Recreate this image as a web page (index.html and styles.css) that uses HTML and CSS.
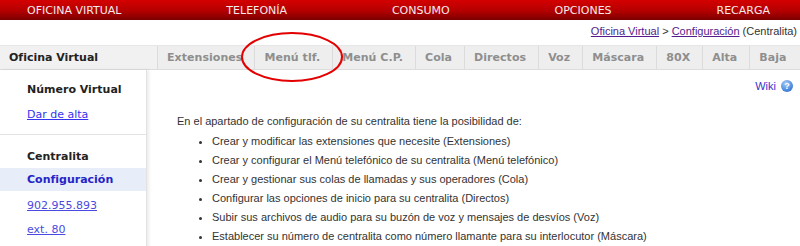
FILE: index.html
```
<!DOCTYPE html>
<html lang="es">
<head>
    <meta charset="UTF-8">
    <title>Oficina Virtual - Centralita</title>
    <link rel="stylesheet" href="styles.css">
</head>
<body>
    <!-- Menú principal -->
    <div class="topnav">
        <a href="#">OFICINA VIRTUAL</a>
        <a href="#">TELEFONÍA</a>
        <a href="#">CONSUMO</a>
        <a href="#">OPCIONES</a>
        <a href="#">RECARGA</a>
    </div>

    <!-- Migas de pan -->
    <div class="crumbs">
        <a href="#">Oficina Virtual</a>&nbsp;&gt;&nbsp;<a href="#">Configuración</a>&nbsp;(Centralita)
    </div>

    <!-- Barra de pestañas -->
    <div class="tabbar">
        <div class="tabbar-title">Oficina Virtual</div>
        <ul class="tabs">
            <li>Extensiones</li>
            <li>Menú tlf.</li>
            <li>Menú C.P.</li>
            <li>Cola</li>
            <li>Directos</li>
            <li>Voz</li>
            <li>Máscara</li>
            <li>80X</li>
            <li>Alta</li>
            <li>Baja</li>
        </ul>
    </div>

    <div class="page">
        <!-- Menú lateral -->
        <div class="side">
            <div class="side-group">
                <div class="side-head">Número Virtual</div>
                <a class="side-link" href="#">Dar de alta</a>
            </div>
            <div class="side-group">
                <div class="side-head">Centralita</div>
                <div class="side-current">Configuración</div>
                <a class="side-link alt" href="#">902.955.893</a>
                <a class="side-link alt" href="#">ext. 80</a>
            </div>
        </div>

        <!-- Contenido -->
        <div class="main">
            <div class="wiki"><a href="#">Wiki</a><span class="help">?</span></div>
            <p class="intro">En el apartado de configuración de su centralita tiene la posibilidad de:</p>
            <ul class="features">
                <li>Crear y modificar las extensiones que necesite (Extensiones)</li>
                <li>Crear y configurar el Menú telefónico de su centralita (Menú telefónico)</li>
                <li>Crear y gestionar sus colas de llamadas y sus operadores (Cola)</li>
                <li>Configurar las opciones de inicio para su centralita (Directos)</li>
                <li>Subir sus archivos de audio para su buzón de voz y mensajes de desvíos (Voz)</li>
                <li>Establecer su número de centralita como número llamante para su interlocutor (Máscara)</li>
                <li>Dar de alta un número en su centralita (Alta)</li>
            </ul>
        </div>
    </div>

    <!-- Marca en rojo sobre la pestaña -->
    <svg class="mark" width="104" height="52" viewBox="0 0 104 52">
        <ellipse cx="52" cy="26" rx="50" ry="24" fill="none" stroke="#e30000" stroke-width="2"/>
    </svg>
</body>
</html>
```

FILE: styles.css
```
/* Base */
body {
    margin: 0;
    background-color: #ffffff;
    font-family: "DejaVu Sans", Verdana, sans-serif;
    overflow: hidden;
    position: relative;
}

/* Menú principal */
.topnav {
    height: 20px;
    display: flex;
    justify-content: space-between;
    align-items: center;
    padding: 0 30px 0 27px;
    background: linear-gradient(#d40000, #b30000 55%, #7c0000);
}

.topnav a {
    color: #f4eaea;
    font-size: 11px;
    text-decoration: none;
}

/* Migas de pan */
.crumbs {
    height: 25px;
    display: flex;
    justify-content: flex-end;
    align-items: center;
    padding: 0 3px 3px 0;
    box-sizing: border-box;
    font-family: "Liberation Sans", Arial, sans-serif;
    font-size: 11px;
    color: #333333;
}

.crumbs a {
    color: #551a8b;
}

/* Pestañas */
.tabbar {
    display: flex;
    height: 25px;
    box-sizing: border-box;
    border-top: 1px solid #e6e6e6;
    border-bottom: 1px solid #dddddd;
    background-color: #eeeeee;
}

.tabbar-title {
    width: 148px;
    flex-shrink: 0;
    padding-left: 9px;
    background-color: #f1f1f1;
    color: #222222;
    font-size: 11px;
    font-weight: bold;
    line-height: 23px;
}

.tabs {
    display: flex;
    flex-shrink: 0;
    margin: 0;
    padding: 0;
    list-style: none;
    white-space: nowrap;
}

.tabs li {
    padding: 0 12px 0 9px;
    border-left: 1px solid #dcdcdc;
    color: #8e8e8e;
    font-size: 11px;
    font-weight: bold;
    letter-spacing: 0.05px;
    line-height: 23px;
}

/* Cuerpo */
.page {
    display: flex;
}

.side {
    width: 146px;
    flex-shrink: 0;
    border-right: 1px solid #e2e2e2;
    box-shadow: 2px 0 3px rgba(0, 0, 0, 0.08);
    min-height: 180px;
    font-size: 11px;
}

.side-group {
    padding: 8px 0 8px;
}

.side-group + .side-group {
    border-top: 1px solid #e4e4e4;
    padding-top: 10px;
}

.side-head,
.side-current,
.side-link {
    display: block;
    padding-left: 27px;
    line-height: 23px;
}

.side-head {
    color: #222222;
    font-weight: bold;
}

.side-head + .side-link {
    margin-top: 2px;
}

.side-current {
    background-color: #e8eef9;
    color: #2424c8;
    font-weight: bold;
}

.side-link {
    color: #3434f0;
}

.side-link.alt {
    color: #4a4ae0;
    line-height: 24px;
}

.side-current + .side-link {
    margin-top: 3px;
}

/* Contenido */
.main {
    flex: 1;
    padding: 9px 7px 0 30px;
    font-family: "Liberation Sans", Arial, sans-serif;
    font-size: 11px;
    color: #333333;
}

.wiki {
    display: flex;
    justify-content: flex-end;
    align-items: center;
    gap: 5px;
    height: 14px;
}

.wiki a {
    color: #3333cc;
    text-decoration: none;
}

.help {
    width: 12px;
    height: 12px;
    border-radius: 50%;
    background: radial-gradient(circle at 40% 30%, #a8cdf7, #3f7fd8 70%, #2d66c0);
    color: #ffffff;
    font-size: 9px;
    font-weight: bold;
    line-height: 12px;
    text-align: center;
}

.intro {
    margin: 21px 0 0;
    line-height: 14px;
}

.features {
    margin: 4px 0 0;
    padding-left: 35px;
    list-style: disc;
}

.features li {
    line-height: 19px;
}

/* Marca roja */
.mark {
    position: absolute;
    left: 240px;
    top: 31px;
}
```
